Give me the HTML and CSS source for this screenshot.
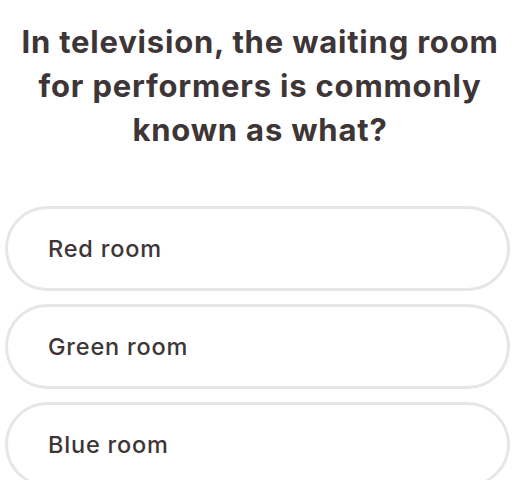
FILE: index.html
```html
<!DOCTYPE html>
<html>
<head>
<meta charset="utf-8">
<link rel="stylesheet" href="styles.css">
</head>
<body>
<div class="quiz">
  <h1 class="question">In television, the waiting room for performers is commonly known as what?</h1>
  <div class="options">
    <div class="option">Red room</div>
    <div class="option">Green room</div>
    <div class="option">Blue room</div>
  </div>
</div>
</body>
</html>
```
FILE: styles.css
```css
html, body {
  margin: 0;
  padding: 0;
  background: #ffffff;
}
body {
  font-family: "Inter", "Noto Sans", sans-serif;
  color: #3e3537;
  overflow: hidden;
  height: 480px;
}
.quiz {
  padding: 20px 10px 0 5px;
  display: flex;
  flex-direction: column;
}
.question {
  margin: 0 5px 0 10px;
  font-size: 31px;
  font-weight: 700;
  line-height: 44px;
  text-align: center;
  letter-spacing: 0.8px;
}
.options {
  margin-top: 54px;
  display: flex;
  flex-direction: column;
  gap: 13px;
}
.option {
  height: 79px;
  border: 3px solid #e7e6e6;
  border-radius: 43px;
  display: flex;
  align-items: center;
  padding-left: 40px;
  font-size: 23.5px;
  font-weight: 500;
  letter-spacing: 0.8px;
}
```
